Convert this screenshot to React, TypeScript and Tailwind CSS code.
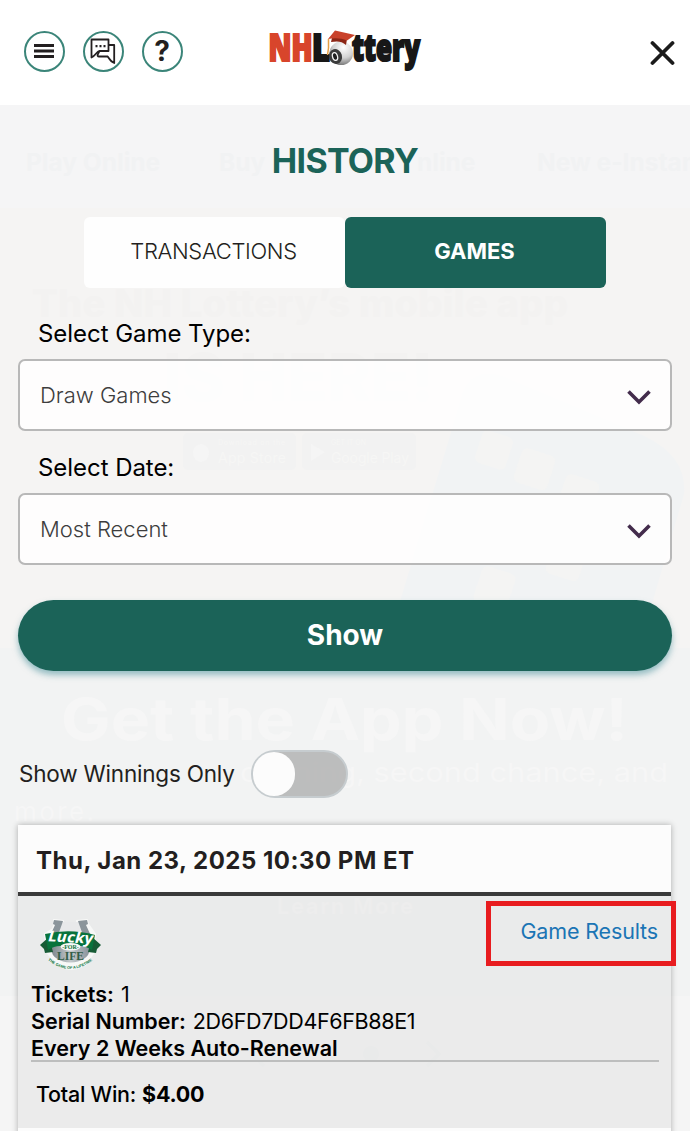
import { clsx } from 'clsx'
import { useState } from 'react'
import type { ReactNode } from 'react'

const HEADER_BUTTON =
  'flex h-[41px] w-[41px] items-center justify-center rounded-full border-2 border-[#3b8579] bg-white text-[#231f20]'

const MenuIcon = () => (
  <svg viewBox="0 0 20 16" className="h-4 w-5" fill="none" stroke="currentColor" strokeWidth="2.8" aria-hidden="true">
    <path d="M0 2.500h20M0 8h20M0 13.500h20" />
  </svg>
)

const ChatIcon = () => (
  <svg viewBox="0 0 26 26" className="h-[26px] w-[26px]" fill="none" stroke="currentColor" strokeWidth="1.800" strokeLinejoin="round" aria-hidden="true">
    <path d="M1.500 1.500h17v11.500H9.500C6.500 13.500 5.500 18 1.500 19.500z" />
    <path d="M18.500 7h5.700V25c-3.200-1-4.500-3.500-6.500-6.500H9c-1.400 0-1.700-1.200-1.200-2.200l1.500-3" />
    <path d="M5.500 8.200h2M9.500 8.200h2M13.500 8.200h2" strokeWidth="2.200" />
  </svg>
)

const CloseIcon = () => (
  <svg viewBox="0 0 26 26" className="h-[26px] w-[26px]" fill="none" stroke="#1b1b1b" strokeWidth="3.800" strokeLinecap="round" aria-hidden="true">
    <path d="M3.500 3l20 20M23.500 3l-20 20" />
  </svg>
)

const Chevron = () => (
  <svg viewBox="0 0 24 15" className="mt-1 h-[15px] w-6" fill="none" stroke="#432c4c" strokeWidth="3.600" aria-hidden="true">
    <path d="M1.500 1.500l10.500 10.500 10.500-10.500" />
  </svg>
)

const Logo = () => (
  <svg viewBox="0 -12 162 74" className="h-[74px] w-[162px]" role="img" aria-label="NH Lottery">
    <defs>
      <radialGradient id="ball" cx="0.6" cy="0.25" r="0.8">
        <stop offset="0" stopColor="#ffffff" />
        <stop offset="0.55" stopColor="#d2d2d2" />
        <stop offset="1" stopColor="#6d6d6d" />
      </radialGradient>
    </defs>
    <g fontFamily="'Open Sans', 'Noto Sans', sans-serif" fontWeight="800" fontSize="37" strokeWidth="2.200">
      <text x="0.500" y="33" textLength="44" lengthAdjust="spacingAndGlyphs" fill="#d8452b" stroke="#d8452b">NH</text>
      <text x="44" y="33" textLength="18" lengthAdjust="spacingAndGlyphs" fill="#171717" stroke="#171717">L</text>
      <text x="84" y="33" textLength="68" lengthAdjust="spacingAndGlyphs" fill="#171717" stroke="#171717">ttery</text>
    </g>
    <circle cx="73.200" cy="25.300" r="11.800" fill="url(#ball)" />
    <ellipse cx="67.500" cy="28.500" rx="6.500" ry="7.500" fill="#3b3b3b" transform="rotate(-15 67.500 28.500)" />
    <ellipse cx="67" cy="28.500" rx="2.500" ry="4" fill="#1f1f1f" stroke="#f1f1f1" strokeWidth="1.300" transform="rotate(-15 67 28.500)" />
    <path d="M64 10c6-2 12-1 15 1l-1 6c-4-4-9-4-15-3z" fill="#8c2616" />
    <path d="M67 2.500l20 4.500-8 5.500c-6-2.500-12-3-19-1.500z" fill="#c9412a" />
    <path d="M60.500 11v9l-1 7" fill="none" stroke="#e5a046" strokeWidth="1.500" />
  </svg>
)

const LuckyForLifeLogo = () => (
  <svg viewBox="0 0 62 52" className="h-[52px] w-[62px]" role="img" aria-label="Lucky for Life">
    <defs>
      <linearGradient id="steel" x1="0" x2="1">
        <stop offset="0" stopColor="#7d878d" />
        <stop offset="0.5" stopColor="#c3c9cc" />
        <stop offset="1" stopColor="#89939a" />
      </linearGradient>
      <path id="tagline" d="M8 42Q30 60 53 42" />
    </defs>
    {/* white halo */}
    <g fill="#f7f8f7" stroke="#f7f8f7" strokeWidth="2" strokeLinejoin="round">
      <path d="M14 2l9 1-1 5-3 8h22l-3-8-1-5 10-1 1 4 7 10-1 18-9 13q-14 8-28 0l-10-13-2-18 8-5 2-6z" />
    </g>
    <path d="M21 4l-4 12h27L39 4z" fill="#e8e9ea" />
    <path d="M14 2l9 1-1 3-4 11-8 1 5-11-2-1zM47 2l-9 1 1 3 4 11 8 1-5-11 2-1z" fill="#8b959b" />
    <ellipse cx="30.500" cy="32" rx="19" ry="12.500" fill="url(#steel)" />
    <path d="M0 27l9-8 4 15-8 1-1-4zM61 27l-9-8-4 15 8 1 1-4z" fill="#175b35" />
    <path d="M5 16q25-6 50 1l-3 15q-7-4-11-4-10-3-21 0-6 0-12 4z" fill="#08733c" />
    <ellipse cx="30.500" cy="28.800" rx="10" ry="3.800" fill="#f6f7f6" />
    <text x="8" y="24.500" textLength="45" lengthAdjust="spacingAndGlyphs" fontFamily="'Open Sans', sans-serif" fontStyle="italic" fontWeight="700" fontSize="15" fill="#fff" transform="rotate(3 30 22)">Lucky</text>
    <text x="30.500" y="31" textAnchor="middle" fontFamily="'Liberation Serif', serif" fontWeight="700" fontSize="6" fill="#08733c">-FOR-</text>
    <text x="17" y="42" textLength="27" fontFamily="'Liberation Serif', serif" fontWeight="700" fontSize="11.500" fill="#315d46">LIFE</text>
    <text fontFamily="'Liberation Sans', sans-serif" fontWeight="700" fontSize="3.800" fill="#08733c">
      <textPath href="#tagline">THE GAME OF A LIFETIME</textPath>
    </text>
  </svg>
)

// The home page behind the history panel, showing faintly through it.
const Backdrop = () => (
  <div className="pointer-events-none absolute inset-0 flex flex-col overflow-hidden whitespace-nowrap" aria-hidden="true">
    <div className="h-[105px] shrink-0 bg-white" />
    <div className="flex h-[103px] shrink-0 items-center bg-[#f5f5f6] pl-[26px] pt-3 text-[24.500px] font-bold text-[#f1f2f3]">
      <span className="w-[193px] shrink-0">Play Online</span>
      <span className="w-[198px] shrink-0">Buy</span>
      <span className="w-[120px] shrink-0">nline</span>
      <span className="shrink-0">New e-Instants</span>
    </div>
    <div className="h-[440px] shrink-0 bg-[#f5f4f3]">
      <svg viewBox="0 0 690 440" className="h-[440px] w-[690px]">
        <g fontFamily="Inter, sans-serif" fontWeight="800" fill="#f3f2f1">
          <text x="32" y="109" fontSize="38" textLength="536">The NH Lottery’s mobile app</text>
          <text x="163" y="193" fontSize="66" textLength="271" lengthAdjust="spacingAndGlyphs">IS HERE!</text>
        </g>
        <path d="M463 185q10-25 38-17l143 60q43 20 40 58l-45 154H386z" fill="#f1f3f4" />
        <g fill="#f4f4f3">
          <rect x="478" y="225" width="32" height="34" rx="6" transform="rotate(18 494 242)" />
          <rect x="517" y="243" width="35" height="36" rx="6" transform="rotate(18 534 261)" />
          <rect x="561" y="269" width="35" height="36" rx="6" transform="rotate(18 578 287)" />
          <rect x="496" y="303" width="35" height="38" rx="6" transform="rotate(18 513 322)" />
          <rect x="549" y="332" width="35" height="38" rx="6" transform="rotate(18 566 351)" />
          <rect x="477" y="361" width="35" height="38" rx="6" transform="rotate(18 494 380)" />
        </g>
        <rect x="183" y="225" width="113" height="37" rx="5" fill="#f2f2f2" />
        <rect x="302" y="225" width="114" height="37" rx="5" fill="#f2f2f2" />
        <ellipse cx="201" cy="245" rx="8" ry="9" fill="#f5f5f5" />
        <path d="M311 236l14 8-14 9z" fill="#f5f5f5" />
        <g fontFamily="Inter, sans-serif" fill="#f6f6f5">
          <text x="218" y="237" fontSize="7" textLength="67">Download on the</text>
          <text x="218" y="255" fontSize="14" textLength="68">App Store</text>
          <text x="331" y="237" fontSize="7">GET IT ON</text>
          <text x="331" y="255" fontSize="14" textLength="78">Google Play</text>
        </g>
      </svg>
    </div>
    <div className="h-[348px] shrink-0 bg-[#f2f3f3]">
      <svg viewBox="0 0 690 348" className="h-[348px] w-[690px]" fontFamily="Inter, sans-serif">
        <text x="61" y="92" fontSize="58" fontWeight="700" textLength="567" lengthAdjust="spacingAndGlyphs" fill="#f6f6f6">Get the App Now!</text>
        <text x="240" y="134" fontSize="26" textLength="428" lengthAdjust="spacingAndGlyphs" fill="#f6f6f6">canning, second chance, and</text>
        <text x="14" y="173" fontSize="26" textLength="80" fill="#f6f6f6">more.</text>
        <text x="277" y="266" fontSize="22" fontWeight="700" textLength="136" fill="#fafafa">Learn More</text>
      </svg>
    </div>
    <div className="grow bg-[#f5f5f5]">
      <svg viewBox="0 0 690 135" className="h-[135px] w-[690px]" fill="none" stroke="#eff0f1" strokeWidth="4">
        <circle cx="371" cy="58" r="8" fill="#eef0f1" stroke="none" />
        <path d="M427 46l12 12-12 12M264 46l-12 12 12 12" />
      </svg>
    </div>
  </div>
)

interface SelectFieldProps {
  label: string
  value: string
}

const SelectField = ({ label, value }: SelectFieldProps) => (
  <div className="flex flex-col">
    <div className="flex h-[54px] items-center pl-5 pt-[3px] text-2xl tracking-[-0.05px] text-black">{label}</div>
    <button
      type="button"
      className="flex h-[72px] items-center justify-between rounded-[7px] border-2 border-[#b8b8b8] bg-white/85 pl-5 pr-[19px] text-[22px] font-light text-[#3d3d3d]"
    >
      <span>{value}</span>
      <Chevron />
    </button>
  </div>
)

const Detail = ({ label, children }: { label: string; children?: ReactNode }) => (
  <div className="flex h-[27px] items-center gap-[7px] whitespace-nowrap">
    <span className="font-semibold">{label}</span>
    <span className="tracking-[-0.35px]">{children}</span>
  </div>
)

const TABS = ['TRANSACTIONS', 'GAMES']

export default function App() {
  const [tab, setTab] = useState('GAMES')
  const [winningsOnly, setWinningsOnly] = useState(false)

  return (
    <div className="relative h-[1131px] w-[690px] overflow-hidden bg-white font-[Inter,sans-serif]">
      <Backdrop />
      <div className="relative flex h-full flex-col">
        <header className="flex h-[105px] shrink-0 items-start pl-[23.500px] pr-[15px]">
          <div className="flex gap-[18px] pt-[30.500px]">
            <button type="button" aria-label="Menu" className={HEADER_BUTTON}>
              <MenuIcon />
            </button>
            <button type="button" aria-label="Chat" className={HEADER_BUTTON}>
              <ChatIcon />
            </button>
            <button type="button" aria-label="Help" className={clsx(HEADER_BUTTON, 'text-[28px] font-bold leading-none')}>
              ?
            </button>
          </div>
          <div className="ml-[85px] mt-4">
            <Logo />
          </div>
          <button type="button" aria-label="Close" className="ml-auto mt-10">
            <CloseIcon />
          </button>
        </header>

        <main className="flex flex-col px-[18px]">
          <h1 className="flex h-[112px] items-center justify-center pb-0.5 text-[34px] font-bold tracking-[-0.7px] text-[#1b6358]">HISTORY</h1>

          <div className="mx-auto grid h-[71px] w-[522px] shrink-0 grid-cols-2 text-[22px]">
            {TABS.map((name) => (
              <button
                key={name}
                type="button"
                onClick={() => setTab(name)}
                className={clsx(
                  'rounded-md pb-0.5 pr-0.5',
                  tab === name
                    ? 'bg-[#1b6358] font-bold text-white'
                    : 'bg-white/90 font-light tracking-[-0.35px] text-[#231f20]',
                )}
              >
                {name}
              </button>
            ))}
          </div>

          <div className="flex flex-col gap-2 pt-[17px]">
            <SelectField label="Select Game Type:" value="Draw Games" />
            <SelectField label="Select Date:" value="Most Recent" />
          </div>

          <button
            type="button"
            className="mt-[35px] h-[71px] rounded-full bg-[#1b6358] pb-0.5 text-[28px] font-bold text-white shadow-[0_4px_6px_rgba(70,142,153,0.55)]"
          >
            Show
          </button>

          <div className="mt-[79px] flex h-12 items-center gap-[17px]">
            <span className="w-[216px] whitespace-nowrap pl-px text-[22.500px] tracking-[-0.2px] text-[#231f20]">Show Winnings Only</span>
            <button
              type="button"
              role="switch"
              aria-checked={winningsOnly}
              aria-label="Show Winnings Only"
              onClick={() => setWinningsOnly(!winningsOnly)}
              className={clsx(
                'flex h-12 w-[97px] rounded-full border-2 border-[#c6cccf] bg-[#b8b8b8]/93',
                winningsOnly && 'justify-end',
              )}
            >
              <span className="h-11 w-[42px] rounded-full bg-[#fcfcfc]" />
            </button>
          </div>

          <section className="mt-[27px] h-[320px] w-[653px] shadow-[0_0_6px_rgba(0,0,0,0.3)]">
            <h2 className="flex h-[71px] items-center border-b-4 border-[#3a3a3a] bg-[#fcfcfc] pl-[18px] pt-[5px] text-2xl font-bold tracking-[0.5px] text-[#231f20]">
              Thu, Jan 23, 2025 10:30 PM ET
            </h2>
            <div className="flex h-[232px] flex-col bg-[#e7e7e7]/70 pl-[13px] pr-3 text-[21.500px] text-black">
              <div className="flex h-[85px] justify-between pt-[5px]">
                <div className="pl-[9px] pt-[17px]">
                  <LuckyForLifeLogo />
                </div>
                <div className="-mr-[17px] flex h-[65px] w-[190px] justify-end border-[5px] border-[#e81c1f] pr-[13px] pt-[9px] tracking-[-0.15px] text-[#1b75b5]">
                  <a href="#results" className="whitespace-nowrap">
                    Game Results
                  </a>
                </div>
              </div>
              <div className="flex h-[79px] flex-col">
                <Detail label="Tickets:">1</Detail>
                <Detail label="Serial Number:">2D6FD7DD4F6FB88E1</Detail>
                <Detail label="Every 2 Weeks Auto-Renewal" />
              </div>
              <div className="flex h-[66px] items-center gap-1.5 border-t-2 border-[#bdbebe] pl-[5px] font-medium tracking-[-0.25px]">
                Total Win: <span className="font-bold">$4.00</span>
              </div>
            </div>
            <div className="h-[17px] bg-[#fcfcfc]" />
          </section>
        </main>
      </div>
    </div>
  )
}
